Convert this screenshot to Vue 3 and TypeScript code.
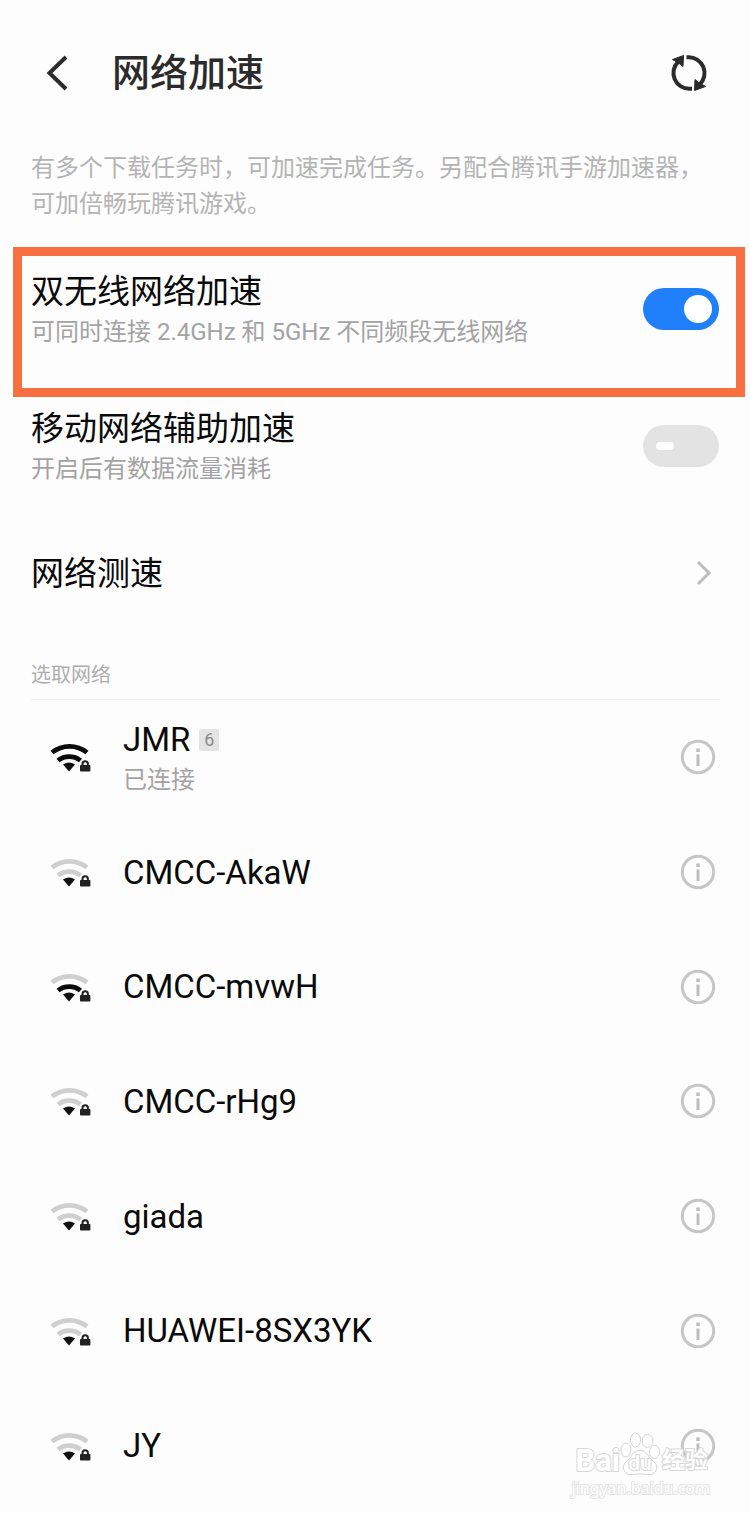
<script setup lang="ts">
import { ref } from 'vue'

interface Network {
  name: string
  level: 1 | 2 | 3
  badge?: string
  status?: string
}

const dualWifi = ref(true)
const mobileAssist = ref(false)

const networks: Network[] = [
  { name: 'JMR', level: 3, badge: '6', status: '已连接' },
  { name: 'CMCC-AkaW', level: 1 },
  { name: 'CMCC-mvwH', level: 2 },
  { name: 'CMCC-rHg9', level: 1 },
  { name: 'giada', level: 1 },
  { name: 'HUAWEI-8SX3YK', level: 1 },
  { name: 'JY', level: 1 },
]
</script>

<template>
  <main class="page">
    <header class="header">
      <button type="button" aria-label="返回">
        <svg width="24" height="38" viewBox="0 0 24 38">
          <path d="M21 3 L4.500 19 L21 35" fill="none" stroke="#2b2b2b" stroke-width="4" />
        </svg>
      </button>
      <h1>网络加速</h1>
      <button type="button" aria-label="刷新">
        <svg width="38" height="38" viewBox="0 0 38 38">
          <g fill="none" stroke="#2b2b2b" stroke-width="4">
            <path d="M22 34.800 H20 A15.800 15.800 0 0 1 8.300 7.600" />
            <path d="M16.500 3.200 H18.500 A15.800 15.800 0 0 1 29.700 30.400" />
          </g>
          <path d="M2.500 5.500 L13.500 1.500 L13 12.500 L10 10 Z M35.500 32.500 L24.500 36.500 L25 25.500 L28 28 Z" fill="#2b2b2b" stroke="#2b2b2b" stroke-width="1" stroke-linejoin="round" />
        </svg>
      </button>
    </header>

    <p class="intro">有多个下载任务时，可加速完成任务。另配合腾讯手游加速器，可加倍畅玩腾讯游戏。</p>

    <section class="highlight">
      <label class="setting" for="dual-wifi">
        <span class="texts">
          <span class="title">双无线网络加速</span>
          <span class="sub">可同时连接 2.4GHz 和 5GHz 不同频段无线网络</span>
        </span>
        <input id="dual-wifi" v-model="dualWifi" class="switch" type="checkbox" role="switch" />
      </label>
    </section>

    <label class="setting plain" for="mobile-assist">
      <span class="texts">
        <span class="title">移动网络辅助加速</span>
        <span class="sub">开启后有数据流量消耗</span>
      </span>
      <input id="mobile-assist" v-model="mobileAssist" class="switch" type="checkbox" role="switch" />
    </label>

    <button class="speed" type="button">
      <span class="title">网络测速</span>
      <svg width="16" height="26" viewBox="0 0 16 26">
        <path d="M2 2 L13 13 L2 24" fill="none" stroke="#bdbdbd" stroke-width="3" />
      </svg>
    </button>

    <section class="networks">
      <h2>选取网络</h2>
      <ul>
        <li v-for="net in networks" :key="net.name">
          <svg class="wifi" width="42" height="30" viewBox="0 0 42 30">
            <g fill="none" stroke-width="4.800">
              <path :class="net.level > 2 ? 'on' : 'off'" d="M2 10.500 A28 28 0 0 1 37 10.500" />
              <path :class="net.level > 1 ? 'on' : 'off'" d="M8 18.500 A18 18 0 0 1 30.500 18.500" />
            </g>
            <path d="M13 22.500 Q19 18.500 25 22.500 L19 29.500 Z" fill="#111" />
            <path d="M32.500 24 V22 A2.700 2.700 0 0 1 37.900 22 V24" fill="none" stroke="#222" stroke-width="2" />
            <rect x="30" y="23" width="10.400" height="6.600" rx="0.800" fill="#222" />
          </svg>
          <span class="texts">
            <span class="title">{{ net.name }}<small v-if="net.badge">{{ net.badge }}</small></span>
            <span v-if="net.status" class="sub">{{ net.status }}</span>
          </span>
          <button type="button" :aria-label="net.name + ' 详情'">
            <svg width="36" height="36" viewBox="0 0 36 36">
              <circle cx="18" cy="18" r="15.700" fill="none" stroke="#c6c6c6" stroke-width="3" />
              <path d="M16.300 9.500 h3.400 v3.400 h-3.400 Z M16.500 15.500 h3 v11.500 h-3 Z" fill="#bdbdbd" />
            </svg>
          </button>
        </li>
      </ul>
    </section>

    <aside class="watermark">
      <div class="brand">
        <span class="outlined">Bai</span>
        <span class="paw">
          <svg width="40" height="44" viewBox="0 0 40 44">
            <g fill="#fff" stroke="#d4d4d4" stroke-width="1">
              <ellipse cx="6" cy="18" rx="5" ry="7" />
              <ellipse cx="15.500" cy="8" rx="5" ry="7" />
              <ellipse cx="27.500" cy="9" rx="5.500" ry="6.500" />
              <ellipse cx="34.500" cy="20" rx="5" ry="6.500" />
              <path d="M20 18.500 C26 18.500 28 24 32 28 C37 32 38 36 35 40 C32 44 26 42 20 42 C14 42 8 44 5 40 C2 36 3 32 8 28 C12 24 14 18.500 20 18.500 Z" />
            </g>
          </svg>
          <span class="du outlined">du</span>
        </span>
        <span class="cjk outlined">经验</span>
      </div>
      <div class="site outlined">jingyan.baidu.com</div>
    </aside>
  </main>
</template>

<style>
body {
  background: #fdfdfd;
}
</style>

<style scoped>
.page {
  position: relative;
  display: flex;
  flex-direction: column;
  box-sizing: border-box;
  min-height: 100vh;
  padding-bottom: 10px;
  color: #0a0a0a;
  background: #fdfdfd;
  font-family: Roboto, "Noto Sans CJK SC", sans-serif;
}

button {
  border: 0;
  padding: 0;
  background: none;
  color: inherit;
  font: inherit;
  cursor: pointer;
}

svg {
  display: block;
}

.header {
  display: flex;
  align-items: center;
  height: 146px;
  padding: 0 42px 0 45px;
}

h1 {
  flex: 1;
  margin: 0 0 0 43px;
  color: #2b2b2b;
  font-size: 38px;
  font-weight: 500;
  line-height: 48px;
}

.intro {
  margin: 4px 31px 25px;
  color: #b4b4b4;
  font-size: 24px;
  line-height: 36px;
}

.highlight {
  margin: 0 5px 0 13px;
  border: 9px solid #f97040;
}

.setting {
  display: flex;
  align-items: center;
  justify-content: space-between;
  height: 80px;
  padding: 13px 17px 39px 9px;
}

.plain {
  padding: 9px 31px 29px;
}

.texts {
  display: flex;
  flex-direction: column;
}

.title {
  font-size: 33px;
  line-height: 44px;
}

.texts,
.speed .title {
  padding-top: 1px;
}

.sub {
  color: #a3a3a3;
  font-size: 24px;
  line-height: 36px;
}

.switch {
  appearance: none;
  display: flex;
  align-items: center;
  flex: none;
  box-sizing: border-box;
  width: 76px;
  height: 42px;
  margin: 0;
  padding: 0 13px;
  border-radius: 21px;
  background: #e3e3e3;
}

.switch::before {
  content: "";
  width: 18px;
  height: 8px;
  border-radius: 4px;
  background: #fff;
}

.switch:checked {
  justify-content: flex-end;
  padding: 0 7px;
  background: #2080fc;
}

.switch:checked::before {
  width: 28px;
  height: 28px;
  border-radius: 14px;
}

.speed {
  display: flex;
  align-items: center;
  justify-content: space-between;
  width: 100%;
  height: 116px;
  padding: 0 38px 0 31px;
}

.networks {
  display: flex;
  flex: 1;
  flex-direction: column;
  padding: 29px 30px 0 31px;
}

h2 {
  margin: 0;
  padding-bottom: 9px;
  border-bottom: 1px solid #f1f1f1;
  color: #adadad;
  font-size: 20px;
  font-weight: 400;
  line-height: 30px;
}

ul {
  display: grid;
  flex: 1;
  grid-auto-rows: 1fr;
  margin: 0;
  padding: 0;
  list-style: none;
}

li {
  display: flex;
  align-items: center;
  min-height: 100px;
  padding: 0 4px 0 19px;
}

.wifi {
  flex: none;
}

.on {
  stroke: #0a0a0a;
}

.off {
  stroke: #cfcfcf;
}

li .texts {
  flex: 1;
  margin-left: 31px;
}

li .title {
  display: flex;
  align-items: center;
}

small {
  margin-left: 9px;
  padding: 0 5px;
  border-radius: 2px;
  background: #e4e4e4;
  color: #8c8c8c;
  font-size: 18px;
  line-height: 22px;
}

.watermark {
  position: absolute;
  right: 40px;
  bottom: 13px;
  color: #fff;
  pointer-events: none;
}

.outlined {
  paint-order: stroke fill;
  -webkit-text-stroke: 2px #d8d8d8;
}

.brand {
  display: flex;
  align-items: flex-end;
  height: 44px;
  margin-left: 4px;
  font-size: 31px;
  font-weight: 700;
  line-height: 30px;
}

.paw {
  position: relative;
}

.du {
  position: absolute;
  inset: auto 0 0;
  font-size: 21px;
  font-weight: 500;
  line-height: 26px;
  text-align: center;
}

.cjk {
  margin-left: 2px;
  font-size: 23px;
}

.site {
  font-family: "Noto Sans", sans-serif;
  font-size: 16px;
  line-height: 24px;
  -webkit-text-stroke-color: #e4e4e4;
}
</style>
